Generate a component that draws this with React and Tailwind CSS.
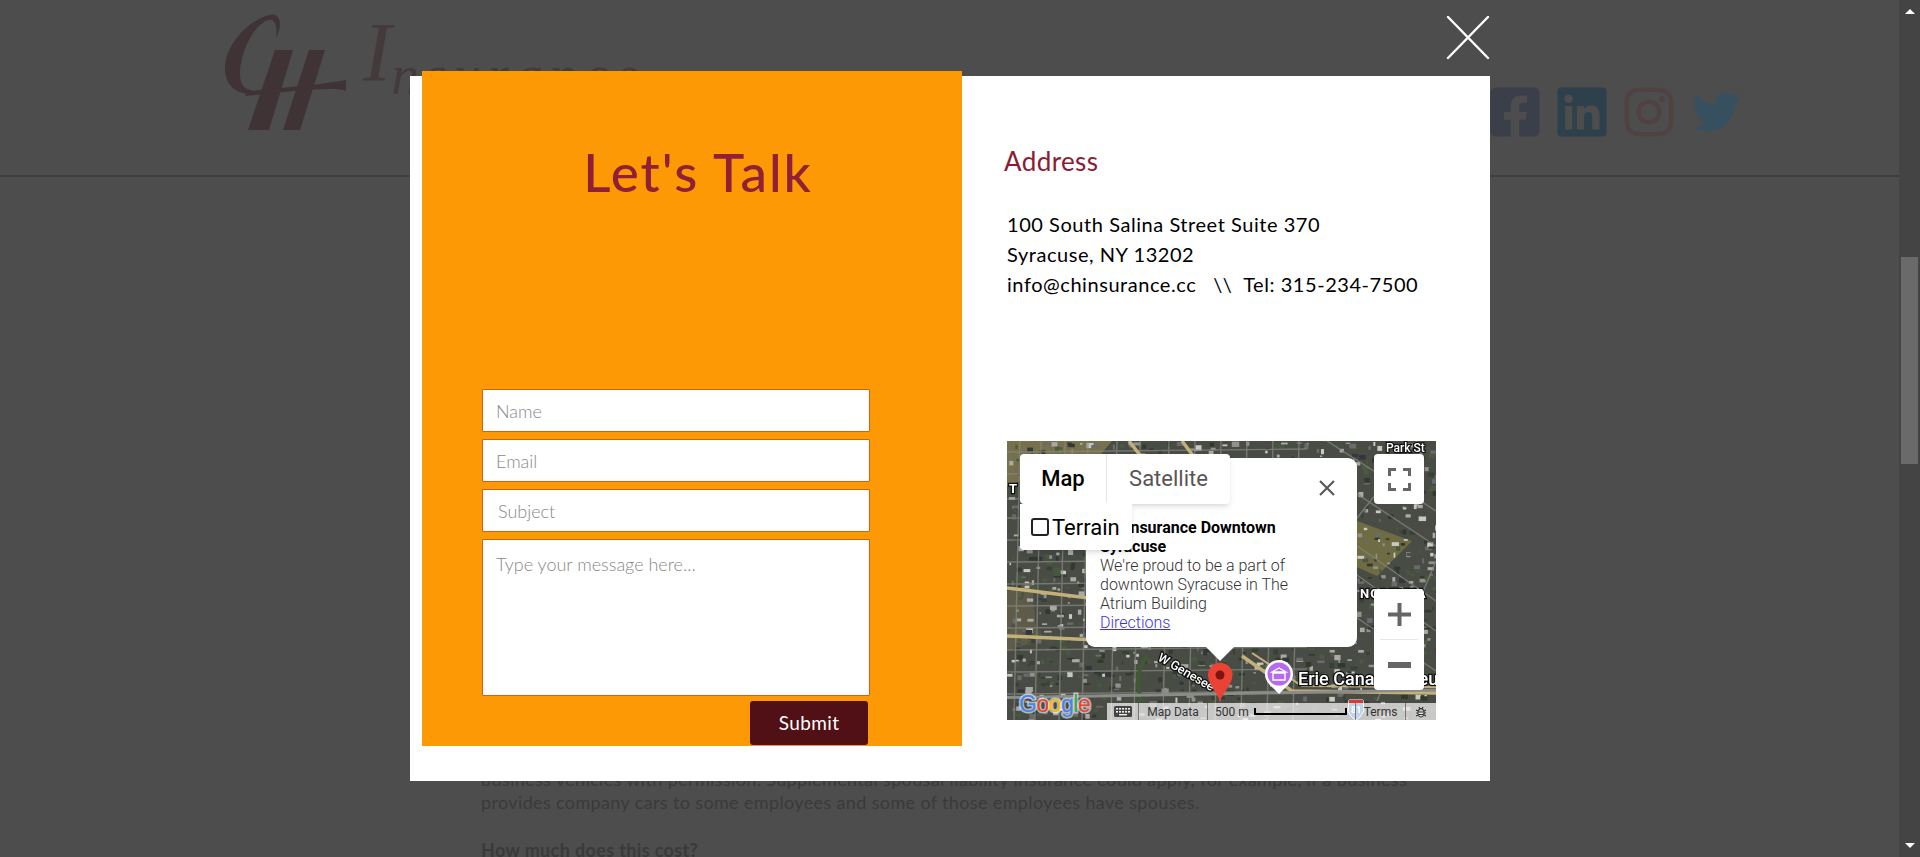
import React from "react"
import { FaFacebookSquare, FaLinkedin, FaInstagram, FaTwitter } from "react-icons/fa"

// seeded numbers so the satellite picture is the same on every load
const makeRandom = (start) => {
  let s = start
  return () => {
    s = (s * 16807) % 2147483647
    return s / 2147483647
  }
}

const buildBlocks = () => {
  const rnd = makeRandom(4217)
  const colors = ["#8f918c", "#4c4f49", "#a9aaa5", "#4d5a3f", "#364233", "#696b6e", "#c9c9c4", "#48573f", "#33363a", "#2f3a2b"]
  const out = []
  for (let x = 0; x < 429; x += 14) {
    for (let y = 0; y < 279; y += 12) {
      const n = 1 + Math.floor(rnd() * 3)
      for (let i = 0; i < n; i++) {
        out.push({
          x: x + rnd() * 12,
          y: y + rnd() * 10,
          w: 1.5 + rnd() * 6,
          h: 1.5 + rnd() * 4,
          fill: colors[Math.floor(rnd() * colors.length)],
        })
      }
    }
  }
  return out
}

const blocks = buildBlocks()

const SatelliteMap = () => (
  <svg viewBox="0 0 429 279" className="block w-full h-full blur-[0.4px]">
    <rect width="429" height="279" fill="#494c45" />
    <path d="M0 0H105L90 18L40 30L0 45Z" fill="#77704c" />
    <path d="M350 80L405 100L370 135L318 112Z" fill="#6f6b42" />
    <path d="M0 150L25 140L30 200L0 210Z" fill="#5e5c48" />
    {blocks.map((b, i) => (
      <rect key={i} x={b.x} y={b.y} width={b.w} height={b.h} fill={b.fill} />
    ))}
    <g stroke="#85877f" strokeWidth="1.4" opacity="0.75">
      {[7, 28, 52, 75, 104, 127, 156, 182, 208, 234, 260, 286].map((x) => (
        <line key={x} x1={x + 6} y1="0" x2={x} y2="279" />
      ))}
      {[11, 33, 58, 77, 99, 121, 143, 165, 187, 209, 231, 253].map((y) => (
        <line key={y} x1="0" y1={y} x2="300" y2={y - 3} />
      ))}
      <path d="M320 0L429 70M300 20L429 105M300 70L429 160M350 100L300 200M410 0L340 90M429 120L370 260M330 120L429 190M310 150L429 230" fill="none" />
    </g>
    <g fill="none" stroke="#c4b17a" strokeWidth="3.5">
      <path d="M0 147L90 158" />
      <path d="M0 195L90 199" />
      <path d="M122 0L136 18" />
      <path d="M175 0L187 16" />
      <path d="M235 215L285 250L429 252" />
      <path d="M245 212L295 245L429 246" strokeWidth="2" />
    </g>
    <path d="M140 215Q125 235 135 260" fill="none" stroke="#3f5a35" strokeWidth="4" />
    <rect x="0" y="255" width="429" height="3" fill="#8b8c88" transform="rotate(-1 0 255)" />
    <g fontFamily="Roboto, sans-serif" fill="#fff" stroke="#111" strokeWidth="2.5" paintOrder="stroke">
      <text x="379" y="11" fontSize="12" fontWeight="500">Park St</text>
      <text x="353" y="157" fontSize="13" fontWeight="700" letterSpacing="1">NORTHEA</text>
      <text x="291" y="244" fontSize="18" fontWeight="500">Erie Canal Museum</text>
      <text x="150" y="219" fontSize="12.5" fontWeight="500" transform="rotate(30 150 219)">W Genesee</text>
      <text x="2" y="52" fontSize="13" fontWeight="700">T</text>
    </g>
    <path d="M342 259H356L357 270Q352 278 349 279Q345 278 341 270Z" fill="#2d6fc0" stroke="#fff" />
    <path d="M342 259H356V263H342Z" fill="#d23c32" />
    <text x="344" y="272" fontFamily="Roboto, sans-serif" fontSize="9" fontWeight="700" fill="#fff">81</text>
    <circle cx="272" cy="233" r="14" fill="#fff" />
    <path d="M262 243L272 253L282 243Z" fill="#fff" />
    <circle cx="272" cy="233" r="11.5" fill="#b56bf0" />
    <path d="M265 231L272 227L279 231ZM266 232H278V239H266Z" fill="none" stroke="#fff" strokeWidth="1.4" />
    <path d="M213 262C211 250 201 245 201 234A12.2 12.2 0 0 1 225.5 234C225.5 245 215 250 213 262Z" fill="#ea4335" />
    <circle cx="213" cy="234" r="4.5" fill="#7d1410" />
  </svg>
)

const Keyboard = () => (
  <svg width="18" height="11" viewBox="0 0 18 11" fill="#444">
    <path d="M1.5 0H16.5Q18 0 18 1.5V9.5Q18 11 16.5 11H1.5Q0 11 0 9.5V1.5Q0 0 1.5 0Z" />
    <g fill="#eee">
      <rect x="2" y="2" width="2" height="1.6" /><rect x="5" y="2" width="2" height="1.6" /><rect x="8" y="2" width="2" height="1.6" /><rect x="11" y="2" width="2" height="1.6" /><rect x="14" y="2" width="2" height="1.6" />
      <rect x="2" y="5" width="2" height="1.6" /><rect x="5" y="5" width="2" height="1.6" /><rect x="8" y="5" width="2" height="1.6" /><rect x="11" y="5" width="2" height="1.6" /><rect x="14" y="5" width="2" height="1.6" />
      <rect x="5" y="8" width="8" height="1.4" />
    </g>
  </svg>
)

const MapEmbed = () => (
  <div className="relative w-[429px] h-[279px] mt-[142px] ml-[3px] overflow-hidden font-['Roboto',sans-serif]">
    <SatelliteMap />

    {/* info window */}
    <div className="absolute left-[79px] top-[17px] w-[271px] h-[189px] bg-white rounded-[9px] pl-[14px] pt-[60px] text-[16px] leading-[19px] font-light text-[#333]">
      <div className="w-[225px] font-bold text-black">CH Insurance Downtown Syracuse</div>
      <div className="w-[225px]">We're proud to be a part of downtown Syracuse in The Atrium Building</div>
      <span className="text-[#3b30ee] underline">Directions</span>
      <svg className="absolute right-[21px] top-[21px]" width="18" height="18" viewBox="0 0 18 18" stroke="#5a5a5a" strokeWidth="2.2">
        <path d="M2 2L16 16M16 2L2 16" />
      </svg>
    </div>
    <div className="absolute left-[199px] top-[206px] w-0 h-0 border-x-[14px] border-x-transparent border-t-[14px] border-t-white" />

    {/* map type buttons */}
    <div className="absolute left-[13px] top-[13px] flex h-[50px] w-[210px] bg-white rounded-sm shadow-md text-[22px] pb-[2px]">
      <div className="w-[87px] flex items-center justify-center font-medium text-black border-r border-[#e6e6e6]">Map</div>
      <div className="flex-1 flex items-center justify-center text-[#565656]">Satellite</div>
    </div>
    <div className="absolute left-[13px] top-[63px] w-[112px] h-[46px] bg-white rounded-b-sm shadow-md flex items-center pl-[11px] gap-[3px] text-[22px] text-black">
      <span className="w-[18px] h-[18px] border-2 border-[#222] rounded-[3px]" />
      Terrain
    </div>

    {/* fullscreen and zoom */}
    <div className="absolute left-[367px] top-[13px] w-[50px] h-[50px] bg-white rounded-sm flex items-center justify-center">
      <svg width="23" height="23" viewBox="0 0 23 23" fill="none" stroke="#666" strokeWidth="3">
        <path d="M1.5 8V1.5H8M15 1.5H21.5V8M21.5 15V21.5H15M8 21.5H1.5V15" />
      </svg>
    </div>
    <div className="absolute left-[367px] top-[148px] w-[50px] h-[101px] bg-white rounded-sm flex flex-col items-center">
      <div className="h-[50px] w-full flex items-center justify-center">
        <svg width="23" height="23" viewBox="0 0 23 23" fill="#666"><path d="M9.5 0H13.5V9.5H23V13.5H13.5V23H9.5V13.5H0V9.5H9.5Z" /></svg>
      </div>
      <div className="w-[38px] h-px bg-[#e6e6e6]" />
      <div className="h-[50px] w-full flex items-center justify-center">
        <svg width="23" height="6" viewBox="0 0 23 6" fill="#666"><rect width="23" height="6" /></svg>
      </div>
    </div>

    {/* google mark */}
    <div className="absolute left-[12px] top-[249px] text-[23px] leading-[28px] font-['Liberation_Sans',sans-serif] [-webkit-text-stroke:3px_rgba(255,255,255,0.6)] [paint-order:stroke_fill] tracking-[-0.5px]">
      <span className="text-[#4285f4]">G</span>
      <span className="text-[#ea4335]">o</span>
      <span className="text-[#fbbc05]">o</span>
      <span className="text-[#4285f4]">g</span>
      <span className="text-[#34a853]">l</span>
      <span className="text-[#ea4335]">e</span>
    </div>

    {/* attribution bar */}
    <div className="absolute right-0 bottom-0 left-[100px] h-[17px] bg-white/70 flex items-center text-[12px] text-[#333]">
      <div className="w-[32px] h-full flex items-center justify-center border-r border-[#777]"><Keyboard /></div>
      <div className="w-[69px] h-full flex items-center justify-center border-r border-[#777]">Map Data</div>
      <div className="w-[148px] h-full flex items-center pl-[7px] border-r border-[#777]">
        500 m
        <span className="ml-[5px] w-[93px] h-[7px] border-x-2 border-b-2 border-black" />
      </div>
      <div className="w-[50px] h-full flex items-center justify-center border-r border-[#777]">Terms</div>
      <div className="flex-1 flex items-center justify-center">
        <svg width="10" height="12" viewBox="0 0 10 12" fill="none" stroke="#333" strokeWidth="1.2">
          <ellipse cx="5" cy="6.8" rx="3" ry="4.2" />
          <path d="M3 1L4 3M7 1L6 3M0 4L2 5M10 4L8 5M0 7H2M10 7H8M0 10L2 9M10 10L8 9M3 6H7M3 8.5H7" />
        </svg>
      </div>
    </div>
  </div>
)

const fieldClass = "w-[388px] bg-white border border-[#cf6312] px-[13px] text-[18px] font-['Lato',sans-serif] font-light text-[#333] placeholder:text-[#888888] outline-none rounded-[1px]"

const ContactForm = () => (
  <form className="flex flex-col gap-[7px] mt-[187px] ml-[60px]">
    <input className={`${fieldClass} h-[43px]`} placeholder="Name" />
    <input className={`${fieldClass} h-[43px]`} placeholder="Email" />
    <input className={`${fieldClass} h-[43px] pl-[15px]`} placeholder="Subject" />
    <textarea className={`${fieldClass} h-[157px] pt-[11px] resize-none`} placeholder="Type your message here..." />
    <div className="flex justify-end w-[386px] -mt-[2px]">
      <button type="button" className="w-[118px] h-[44px] bg-[#511015] text-white text-[19px] tracking-[0.4px] rounded-[3px]">Submit</button>
    </div>
  </form>
)

const Modal = () => (
  <div className="absolute inset-0">
    <div className="absolute left-[410px] top-[76px] w-[1080px] h-[705px] bg-white flex items-start">
      <div className="w-[540px] h-[675px] ml-[12px] -mt-[5px] bg-[#fd9905] flex flex-col">
        <h2 className="mt-[71px] text-center pl-[12px] text-[53px] leading-[60px] font-medium text-[#8f2035] tracking-[2px]">Let's Talk</h2>
        <ContactForm />
      </div>
      <div className="ml-[42px] pt-[70px]">
        <h3 className="text-[26px] leading-[30px] tracking-[0.4px] text-[#8a1c34]">Address</h3>
        <div className="mt-[33px] ml-[3px] text-[20px] leading-[30px] text-black tracking-[0.55px]">
          <p>100 South Salina Street Suite 370</p>
          <p>Syracuse, NY 13202</p>
          <p>info@chinsurance.cc &nbsp; \\ &nbsp;Tel: 315-234-7500</p>
        </div>
        <MapEmbed />
      </div>
    </div>
    <button type="button" aria-label="Close" className="absolute left-[1446px] top-[16px]">
      <svg width="44" height="44" viewBox="0 0 44 44" stroke="#fff" strokeWidth="2.4" strokeLinecap="round" className="block">
        <path d="M2 1L42 42M42 1L2 42" />
      </svg>
    </button>
  </div>
)

const PageHeader = () => (
  <header className="h-[177px] shrink-0 border-b-2 border-[#3e3e3e] flex items-start justify-between pl-[224px] pr-[159px] overflow-hidden">
    <div className="flex items-start">
      <svg width="124" height="120" viewBox="0 0 124 120" className="mt-[14px]" fill="#3f3335">
        <path d="M45 1C58 -3 58 14 52 24C54 10 50 4 44 6C28 12 16 40 16 60C16 72 22 76 28 76L28 79C12 82 0 70 1 52C2 34 20 8 45 1Z" />
        <path d="M51 36H69L45 116H24Z" />
        <path d="M85 36H101L76 116H59Z" />
        <path d="M20 78C50 74 90 72 122 66L122 77C110 72 60 78 22 82Z" />
      </svg>
      <span className="ml-[15px] mt-[2px] font-['Liberation_Serif',serif] italic text-[85px] leading-[100px] text-[#443a3c]">
        I<span className="text-[56px] tracking-[6px] align-[-13px]">nsurance</span>
      </span>
    </div>
    <div className="flex items-center gap-[11px] mt-[84px]">
      <FaFacebookSquare className="w-[56px] h-[56px] text-[#3a3f4a]" />
      <FaLinkedin className="w-[56px] h-[56px] text-[#2d404c]" />
      <FaInstagram className="w-[56px] h-[56px] text-[#4f4241]" />
      <FaTwitter className="ml-[4px] w-[48px] h-[48px] text-[#36505f]" />
    </div>
  </header>
)

const Scrollbar = () => (
  <div className="w-[21px] h-full bg-[#444444] flex flex-col items-center relative">
    <div className="mt-[9px] w-0 h-0 border-x-[5px] border-x-transparent border-b-[5px] border-b-white" />
    <div className="absolute top-[257px] left-[2px] w-[17px] h-[207px] bg-[#6a6a6a]" />
    <div className="mt-auto mb-[9px] w-0 h-0 border-x-[5px] border-x-transparent border-t-[5px] border-t-white" />
  </div>
)

export default function App() {
  return (
    <div className="relative h-[857px] w-full overflow-hidden flex bg-[#4d4d4d] font-['Lato','Open_Sans',sans-serif]">
      <div className="flex-1 flex flex-col min-w-0">
        <PageHeader />
        <div className="pt-[591px] pl-[481px] text-[18px] leading-[23px] tracking-[0.36px] text-[#3a3a3a]">
          <p className="w-[935px]">business vehicles with permission. Supplemental spousal liability insurance could apply, for example, if a business provides company cars to some employees and some of those employees have spouses.</p>
          <p className="mt-[25px] font-bold">How much does this cost?</p>
        </div>
      </div>
      <Scrollbar />
      <Modal />
    </div>
  )
}
